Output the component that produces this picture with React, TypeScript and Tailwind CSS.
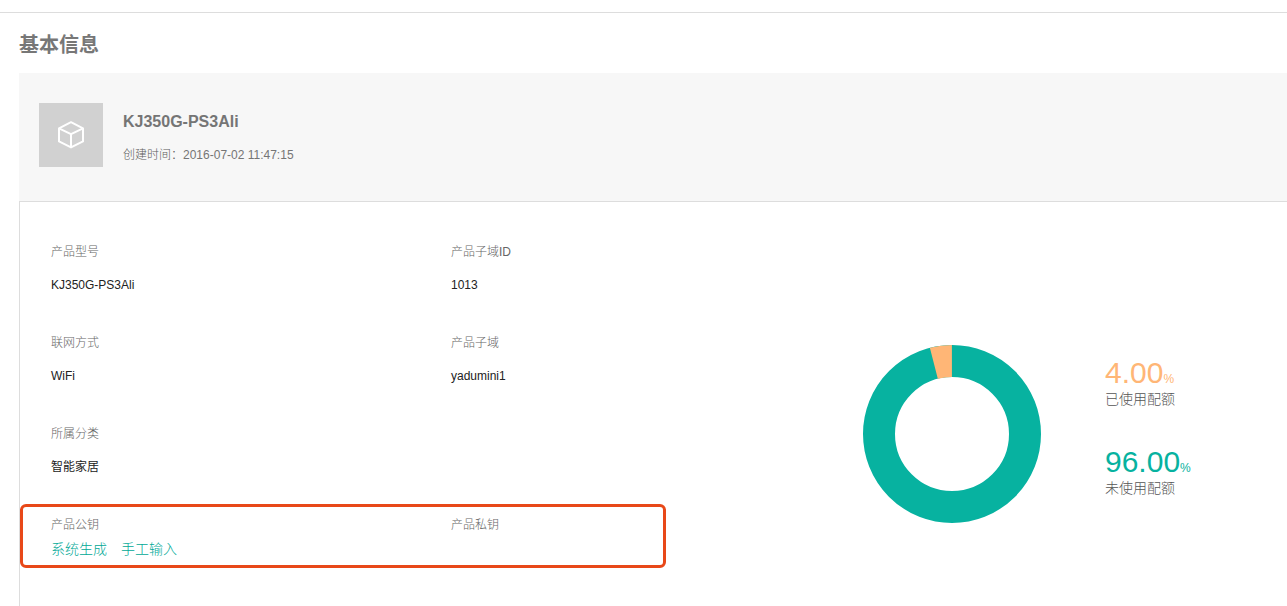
import React from "react";

type FieldProps = { label: string; value?: string };

function Field({ label, value }: FieldProps) {
  return (
    <div className="flex flex-col gap-[15px]">
      <dt className="font-light text-[#666666]">{label}</dt>
      {value && <dd className="text-[#222222]">{value}</dd>}
    </div>
  );
}

type QuotaProps = { value: string; label: string; color: string };

function Quota({ value, label, color }: QuotaProps) {
  return (
    <div>
      <p className={`text-[30px] leading-8 ${color}`}>
        {value}
        <span className="text-xs">%</span>
      </p>
      <p className="text-sm leading-5 font-light text-[#555555]">{label}</p>
    </div>
  );
}

function CubeIcon() {
  return (
    <svg
      viewBox="0 0 28 28"
      className="size-7"
      fill="none"
      stroke="#ffffff"
      strokeWidth="2"
      strokeLinejoin="round"
      aria-hidden="true"
    >
      <path d="M14 1.2 L26 7.4 V20.4 L14 26.4 L2 20.4 V7.4 Z" />
      <path d="M2 7.4 L14 13.2 L26 7.4 M14 13.2 V26.4" />
    </svg>
  );
}

function QuotaChart() {
  return (
    <svg
      viewBox="0 0 178 178"
      className="size-[178px] shrink-0"
      role="img"
      aria-label="配额"
    >
      <circle cx="89" cy="89" r="73" fill="none" stroke="#07b2a0" strokeWidth="32" />
      <circle
        cx="89"
        cy="89"
        r="73"
        fill="none"
        stroke="#ffb676"
        strokeWidth="32"
        pathLength="100"
        strokeDasharray="4 96"
        transform="rotate(-104.4 89 89)"
      />
    </svg>
  );
}

export default function App() {
  return (
    <div className="flex min-h-screen flex-col bg-white pt-3 font-['Liberation_Sans','Noto_Sans_CJK_SC',sans-serif] text-xs leading-[18px]">
      <main className="flex flex-1 flex-col border-t border-[#dddddd] pl-[19px]">
        <h1 className="pt-[18px] pb-3.5 text-xl leading-7 font-bold text-[#777777]">基本信息</h1>

        <header className="flex h-32 items-start gap-5 bg-[#f7f7f7] px-5 pt-[30px]">
          <div className="flex size-16 items-center justify-center bg-[#d1d1d1]">
            <CubeIcon />
          </div>
          <div className="pt-[9px]">
            <h2 className="text-base leading-5 font-bold text-[#757575]">KJ350G-PS3Ali</h2>
            <p className="pt-3.5 text-[#757575]">
              <span className="font-light text-[#5c5c5c]">创建时间：</span>2016-07-02 11:47:15
            </p>
          </div>
        </header>

        <section className="flex flex-1 items-start border-t border-l border-[#dddddd]">
          <div className="w-[646px] pt-[41px]">
            <dl className="grid grid-cols-[400px_1fr] gap-y-10 pl-[31px]">
              <Field label="产品型号" value="KJ350G-PS3Ali" />
              <Field label="产品子域ID" value="1013" />
              <Field label="联网方式" value="WiFi" />
              <Field label="产品子域" value="yadumini1" />
              <Field label="所属分类" value="智能家居" />
            </dl>

            <dl className="mt-7 grid grid-cols-[400px_1fr] rounded-md border-3 border-[#e84818] pt-[9px] pb-1.5 pl-7">
              <div className="flex flex-col gap-[5px]">
                <dt className="font-light text-[#666666]">产品公钥</dt>
                <dd className="flex gap-3.5 text-sm font-light text-[#00a896]">
                  <a href="#generate">系统生成</a>
                  <a href="#manual">手工输入</a>
                </dd>
              </div>
              <Field label="产品私钥" />
            </dl>
          </div>

          <div className="flex flex-1 gap-16 pt-[143px] pl-[197px]">
            <QuotaChart />
            <div className="flex flex-col gap-[37px] pt-3">
              <Quota value="4.00" label="已使用配额" color="text-[#ffb676]" />
              <Quota value="96.00" label="未使用配额" color="text-[#07b2a0]" />
            </div>
          </div>
        </section>
      </main>
    </div>
  );
}
